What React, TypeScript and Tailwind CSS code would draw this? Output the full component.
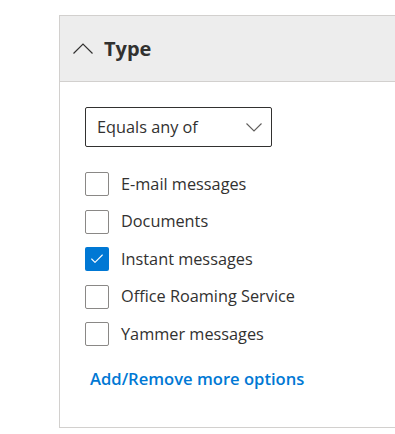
import { Check } from 'lucide-react';

const options = [
  { label: 'E-mail messages', checked: false },
  { label: 'Documents', checked: false },
  { label: 'Instant messages', checked: true },
  { label: 'Office Roaming Service', checked: false },
  { label: 'Yammer messages', checked: false },
];

export default function App() {
  return (
    <div
      className="min-h-[434px] bg-white pt-[15px] pl-[59px]"
      style={{ fontFamily: '"Open Sans", "Noto Sans", Arial, sans-serif' }}
    >
      <div className="border-l border-t border-b border-[#d2d0ce] h-[413px]">
        <div className="h-[66px] bg-[#ededed] border-b border-[#d2d0ce] flex items-center pl-[13px]">
          <svg width="20" height="11" viewBox="0 0 20 11" className="text-[#323130]">
            <polyline points="0.5,10.5 10,1 19.5,10.5" fill="none" stroke="currentColor" strokeWidth="1.2" />
          </svg>
          <span className="ml-[11px] text-[20px] font-bold text-[#323130] leading-none">Type</span>
        </div>

        <div className="pl-[25px] pt-[25px]">
          <div className="w-[187px] h-[40px] border border-[#323130] rounded-[2px] flex items-center justify-between pl-[11px] pr-[9px]">
            <span className="text-[16.3px] text-[#323130]">Equals any of</span>
            <svg width="16" height="9" viewBox="0 0 16 9" className="text-[#605e5c]">
              <polyline points="0.5,0.5 8,8 15.5,0.5" fill="none" stroke="currentColor" strokeWidth="1.1" />
            </svg>
          </div>

          <div className="mt-[25px] flex flex-col gap-[13.5px]">
            {options.map((opt) => (
              <label key={opt.label} className="flex items-center h-[24px]">
                {opt.checked ? (
                  <span className="w-[24px] h-[24px] rounded-[2px] bg-[#0078d4] flex items-center justify-center">
                    <Check className="w-[16px] h-[16px] text-white" strokeWidth={1.6} />
                  </span>
                ) : (
                  <span className="w-[24px] h-[24px] rounded-[2px] border border-[#8a8886] bg-white" />
                )}
                <span className="ml-[12px] text-[16.3px] text-[#323130]">{opt.label}</span>
              </label>
            ))}
          </div>

          <a className="block mt-[21px] ml-[5px] text-[16.6px] font-semibold text-[#0078d4]">
            Add/Remove more options
          </a>
        </div>
      </div>
    </div>
  );
}
